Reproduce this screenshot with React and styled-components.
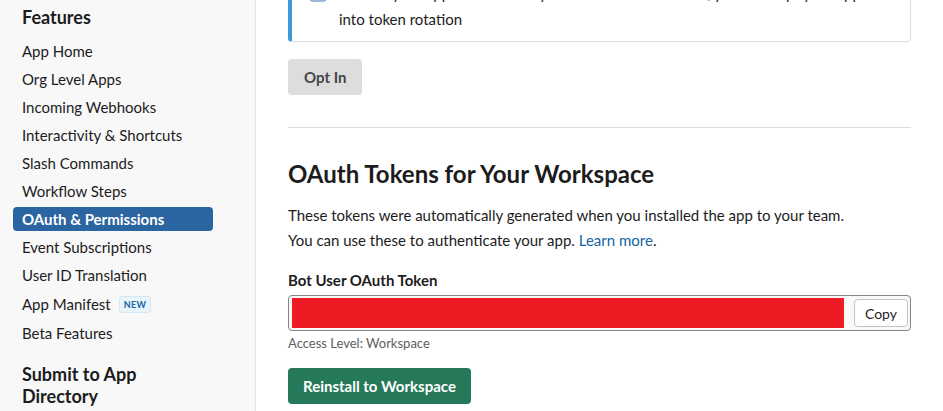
import React from 'react';
import styled, { createGlobalStyle } from 'styled-components';

const GlobalStyle = createGlobalStyle`
  html, body {
    margin: 0;
    padding: 0;
    background: #fff;
  }
  body {
    font-family: Lato, "Open Sans", "Liberation Sans", sans-serif;
    color: #1d1c1d;
    overflow: hidden;
  }
`;

const Page = styled.div`
  display: flex;
  width: 943px;
  height: 411px;
  overflow: hidden;
`;

const Sidebar = styled.nav`
  width: 256px;
  flex-shrink: 0;
  background: #f8f8f8;
  border-right: 1px solid #e4e4e4;
  padding: 6px 0 0 13px;
  box-sizing: border-box;
`;

const SideHeading = styled.h3`
  margin: 0 0 11px 9px;
  font-size: 18px;
  line-height: 22px;
  font-weight: 700;
  color: #1d1c1d;
  width: 180px;
`;

const NavList = styled.ul`
  display: flex;
  flex-direction: column;
  gap: 4px;
  list-style: none;
  margin: 0;
  padding: 0;
`;

const NavItem = styled.li`
  display: flex;
  align-items: center;
  width: 200px;
  height: ${p => p.$tall ? 26 : 24}px;
  padding-left: 9px;
  box-sizing: border-box;
  border-radius: 4px;
  font-size: 15px;
  font-weight: ${p => p.$active ? 700 : 400};
  color: ${p => p.$active ? '#fff' : '#1d1c1d'};
  background: ${p => p.$active ? '#2a64a1' : 'transparent'};
`;

const Badge = styled.span`
  margin-left: 8px;
  padding: 0 4px;
  height: 15px;
  line-height: 15px;
  border-radius: 3px;
  background: #e8f5fa;
  border: 1px solid #d3e8f4;
  color: #1264a3;
  font-size: 9px;
  font-weight: 700;
  letter-spacing: 0.3px;
`;

const SubmitBlock = styled.div`
  margin-top: 18px;
`;

const Main = styled.main`
  flex: 1;
  padding: 0 32px;
  min-width: 0;
`;

// the page is scrolled, so the top of this notice sits above the window
const Callout = styled.div`
  display: flex;
  align-items: flex-start;
  gap: 12px;
  margin-top: -33px;
  padding: 12px 16px 9px 17px;
  border: 1px solid #ddd;
  border-left: 4px solid #3d9ad6;
  border-radius: 4px;
  font-size: 15px;
  line-height: 26px;
  white-space: nowrap;
`;

const CheckIcon = styled.svg`
  flex-shrink: 0;
  margin-top: 4px;
`;

const Button = styled.button`
  display: inline-flex;
  align-items: center;
  height: 36px;
  padding: 0 ${p => p.$pad || 15}px;
  border: none;
  border-radius: 4px;
  font-family: inherit;
  font-size: 15px;
  font-weight: 700;
  background: ${p => p.$bg};
  color: ${p => p.$fg};
`;

const OptIn = styled(Button)`
  margin-top: 17px;
`;

const Divider = styled.hr`
  margin: 32px 0 0;
  border: none;
  border-top: 1px solid #ddd;
`;

const Title = styled.h2`
  margin: 31px 0 14px;
  font-size: 24px;
  line-height: 30px;
  font-weight: 700;
`;

const Para = styled.p`
  margin: 0;
  font-size: 15px;
  line-height: 25px;
`;

const Link = styled.a`
  color: #1264a3;
  text-decoration: none;
`;

const Label = styled.div`
  margin-top: 16px;
  font-size: 15px;
  line-height: 22px;
  font-weight: 700;
`;

const TokenField = styled.div`
  display: flex;
  align-items: center;
  margin-top: 4px;
  height: 36px;
  box-sizing: border-box;
  padding: 1px 2px 1px 3px;
  border: 1px solid #868686;
  border-radius: 4px;
  background: #f8f8f8;
`;

const Redacted = styled.div`
  flex: 1;
  align-self: stretch;
  margin: 1px 0;
  background: #ed1c24;
`;

const CopyButton = styled.button`
  margin-left: 10px;
  height: 28px;
  padding: 0 10px;
  border: 1px solid #c4c4c4;
  border-radius: 4px;
  background: #fff;
  font-family: inherit;
  font-size: 14px;
  color: #1d1c1d;
`;

const Hint = styled.div`
  margin-top: 4px;
  font-size: 13px;
  line-height: 16px;
  color: #616061;
`;

const Reinstall = styled(Button)`
  margin-top: 17px;
`;

const features = [
  'App Home',
  'Org Level Apps',
  'Incoming Webhooks',
  'Interactivity & Shortcuts',
  'Slash Commands',
  'Workflow Steps',
  'OAuth & Permissions',
  'Event Subscriptions',
  'User ID Translation',
  'App Manifest',
  'Beta Features',
];

const App = () => {
  return (
    <Page>
      <GlobalStyle />
      <Sidebar>
        <SideHeading>Features</SideHeading>
        <NavList>
          {features.map(f => (
            <NavItem
              key={f}
              $active={f === 'OAuth & Permissions'}
              $tall={f === 'App Manifest'}
            >
              {f}
              {f === 'App Manifest' && <Badge>NEW</Badge>}
            </NavItem>
          ))}
        </NavList>
        <SubmitBlock>
          <SideHeading>Submit to App Directory</SideHeading>
        </SubmitBlock>
      </Sidebar>
      <Main>
        <Callout>
          <CheckIcon width="18" height="18" viewBox="0 0 18 18">
            <rect x="1" y="1" width="16" height="16" rx="3" fill="#fff" stroke="#7f9fc6" strokeWidth="1.5" />
          </CheckIcon>
          <div>
            Refresh your app's tokens every 12 hours. Once enabled, you can't opt your app
            <br />
            into token rotation
          </div>
        </Callout>
        <OptIn $bg="#dddddd" $fg="#454545" $pad={16}>Opt In</OptIn>
        <Divider />
        <Title>OAuth Tokens for Your Workspace</Title>
        <Para>These tokens were automatically generated when you installed the app to your team.</Para>
        <Para>
          You can use these to authenticate your app. <Link href="#">Learn more</Link>.
        </Para>
        <Label>Bot User OAuth Token</Label>
        <TokenField>
          <Redacted />
          <CopyButton>Copy</CopyButton>
        </TokenField>
        <Hint>Access Level: Workspace</Hint>
        <Reinstall $bg="#267958" $fg="#fff">Reinstall to Workspace</Reinstall>
      </Main>
    </Page>
  );
};

export default App;
